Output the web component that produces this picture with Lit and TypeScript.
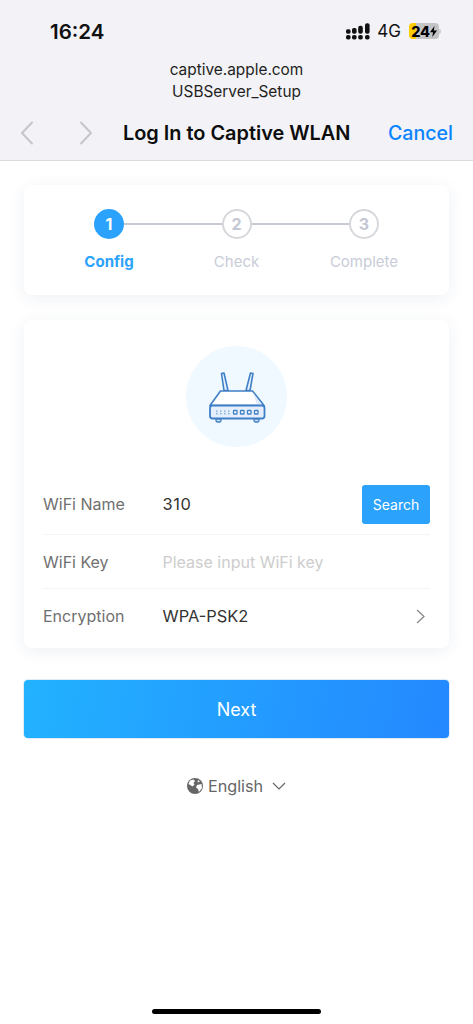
import { LitElement, html, css, svg } from "lit";
import { customElement } from "lit/decorators.js";

const steps = [
  { n: "1", label: "Config", active: true },
  { n: "2", label: "Check", active: false },
  { n: "3", label: "Complete", active: false },
];

const chevronLeft = svg`<path d="M12 1.500 2 12l10 10.500" fill="none" stroke="#c6c6ca" stroke-width="2" stroke-linecap="round" stroke-linejoin="round"/>`;
const chevronRight = svg`<path d="M2 1.500 12 12 2 22.500" fill="none" stroke="#c6c6ca" stroke-width="2" stroke-linecap="round" stroke-linejoin="round"/>`;

@customElement("app-root")
export class AppRoot extends LitElement {
  static styles = css`
    :host {
      display: block;
      width: 473px;
      height: 1024px;
      overflow: hidden;
      position: relative;
      background: #fff;
      font-family: Inter, "Liberation Sans", sans-serif;
    }

    .top {
      height: 160px;
      background: #f2f2f7;
      border-bottom: 1px solid #dcdcdf;
      display: flex;
      flex-direction: column;
    }

    .status {
      display: flex;
      align-items: center;
      height: 20px;
      margin-top: 21px;
      padding: 0 32px 0 50px;
    }
    .time {
      font-size: 20.5px;
      font-weight: 600;
      color: #111;
      flex: 1;
    }
    .signal { margin-right: 7px; display: block; }
    .net {
      font-size: 17px;
      color: #111;
      margin-right: 8px;
    }
    .battery {
      width: 30px;
      height: 16px;
      border-radius: 4px;
      background: linear-gradient(90deg, #ffcc00 0 24%, #c4c4c6 24% 100%);
      font-size: 14.5px;
      font-weight: 800;
      letter-spacing: -0.3px;
      color: #000;
      display: flex;
      align-items: center;
      justify-content: center;
    }
    .nub {
      width: 2px;
      height: 5px;
      border-radius: 0 2px 2px 0;
      background: #d0d0d2;
    }

    .site {
      margin-top: 18px;
      text-align: center;
      font-size: 15.4px;
      line-height: 22px;
      color: #1f1f21;
    }

    .nav {
      display: flex;
      align-items: center;
      height: 24px;
      margin-top: 18px;
      padding: 0 20px;
    }
    .nav svg { display: block; }
    .nav .fwd { margin-left: 45px; }
    .title {
      margin-left: 30px;
      font-size: 19.9px;
      font-weight: 600;
      color: #0c0c0c;
      flex: 1;
      white-space: nowrap;
    }
    .cancel {
      font-size: 19.6px;
      font-weight: 500;
      color: #0a84ff;
    }

    .content {
      padding: 24px 24px 0;
    }

    .card {
      background: #fff;
      border-radius: 8px;
      box-shadow: 0 3px 16px rgba(40, 70, 110, 0.08);
    }

    .steps {
      height: 110px;
      box-sizing: border-box;
      padding-top: 24px;
      display: grid;
      grid-template-columns: repeat(3, 127.5px);
      justify-content: center;
    }
    .step {
      display: flex;
      flex-direction: column;
      align-items: center;
      position: relative;
    }
    .step:not(:last-child)::after {
      content: "";
      position: absolute;
      left: 50%;
      width: 100%;
      top: 14px;
      height: 2px;
      background: #c6cad3;
    }
    .dot {
      position: relative;
      z-index: 1;
      box-sizing: border-box;
      width: 30px;
      height: 30px;
      border-radius: 50%;
      border: 2px solid #d6d8dc;
      background: #fff;
      color: #c4c8d4;
      font-size: 16px;
      font-weight: 700;
      display: flex;
      align-items: center;
      justify-content: center;
    }
    .step.active .dot {
      background: #2ba2fc;
      border-color: #2ba2fc;
      color: #fff;
    }
    .label {
      margin-top: 13px;
      font-size: 15px;
      line-height: 20px;
      color: #c8ccd8;
    }
    .step.active .label {
      color: #2ba2fc;
      font-weight: 700;
    }

    .form {
      margin-top: 25px;
      height: 328px;
      box-sizing: border-box;
      padding: 26px 19px 0;
    }
    .hero {
      width: 101px;
      height: 101px;
      margin: 0 auto;
      border-radius: 50%;
      background: #f0f9ff;
      display: flex;
      align-items: center;
      justify-content: center;
    }
    .fields { margin-top: 27px; }
    .row {
      box-sizing: border-box;
      display: flex;
      align-items: center;
      font-size: 16px;
      border-bottom: 1px solid #f3f4f6;
    }
    .row:last-child { border-bottom: 0; }
    .row.name { height: 61px; }
    .row.key { height: 54px; }
    .row.enc { height: 54px; }
    .row .name-label {
      width: 119.5px;
      color: #707070;
    }
    .row .value {
      flex: 1;
      font-size: 16.4px;
      color: #333;
    }
    .row .value.digits { letter-spacing: 0.6px; }
    .row .placeholder {
      flex: 1;
      color: #cdcdcd;
    }
    .search {
      width: 68px;
      height: 39px;
      border-radius: 3px;
      background: #2ba2fc;
      color: #fff;
      font-size: 14px;
      display: flex;
      align-items: center;
      justify-content: center;
    }
    .arrow { display: block; margin-right: 5px; }

    .next {
      margin-top: 32px;
      height: 58px;
      border-radius: 4px;
      background: linear-gradient(100deg, #22b2ff, #2488ff);
      box-shadow: 0 0 0 1px #e2ecf9;
      color: #fff;
      font-size: 18px;
      display: flex;
      align-items: center;
      justify-content: center;
    }

    .lang {
      margin-top: 37px;
      display: flex;
      align-items: center;
      justify-content: center;
      gap: 5px;
      font-size: 16.2px;
      line-height: 22px;
      color: #666;
    }
    .lang svg { display: block; }
    .lang .caret { margin-left: 4px; }

    .home {
      position: absolute;
      left: 152px;
      top: 1009px;
      width: 169px;
      height: 5px;
      border-radius: 3px;
      background: #000;
    }
  `;

  renderRouter() {
    const line = "#3f7fc6";
    return html`<svg width="60" height="56" viewBox="0 0 60 56">
      <path d="M14.500 4.500 17 4 21 21.500H17ZM43.500 4 46 4.500 43 21.500H39Z" fill="#e8f2fc" stroke=${line} stroke-width="1.600" stroke-linejoin="round"/>
      <path d="M13.500 22H45.500L57 36.500H3Z" fill="#fff" stroke=${line} stroke-width="1.600" stroke-linejoin="round"/>
      <path d="M46 23.500 55 36H50Z" fill="#dfeafa"/>
      <rect x="3" y="36.500" width="54.500" height="13" rx="2.500" fill="#e4effb" stroke=${line} stroke-width="1.800"/>
      <path d="M9 50h5v1.500a1.500 1.500 0 0 1-1.500 1.500h-2A1.500 1.500 0 0 1 9 51.500ZM47 50h5v1.500a1.500 1.500 0 0 1-1.500 1.500h-2a1.500 1.500 0 0 1-1.500-1.500Z" fill="#cfe0f6" stroke=${line} stroke-width="1.300"/>
      ${[9, 13, 17, 21].map(
        (x) => svg`<rect x=${x} y="41.500" width="1.500" height="1.300" fill="#7aa8dc"/><rect x=${x} y="44" width="1.500" height="1.300" fill="#7aa8dc"/>`
      )}
      ${[26.5, 33.5, 40.5, 47.5].map(
        (x) => svg`<rect x=${x} y="41.500" width="3.500" height="3.500" rx="0.600" fill="#fff" stroke=${line} stroke-width="1.300"/>`
      )}
    </svg>`;
  }

  render() {
    return html`
      <div class="top">
        <div class="status">
          <span class="time">16:24</span>
          <svg class="signal" width="24" height="17" viewBox="0 0 24 17" fill="#111">
            <rect x="0" y="6.300" width="4.600" height="4.400" rx="1.600"/><rect x="0" y="12" width="4.600" height="4.600" rx="1.800"/>
            <rect x="6" y="5" width="4.600" height="5.700" rx="1.800"/><rect x="6" y="12" width="4.600" height="4.600" rx="1.800"/>
            <rect x="12.200" y="2.700" width="4.600" height="8" rx="2"/><rect x="12.200" y="12" width="4.600" height="4.600" rx="1.800"/>
            <rect x="19" y="0.300" width="4.600" height="10.400" rx="2"/><rect x="19" y="12" width="4.600" height="4.600" rx="1.800"/>
          </svg>
          <span class="net">4G</span>
          <span class="battery">24<svg width="7" height="11" viewBox="0 0 7 11"><path d="M4.500 0 0 6.300H3L2.300 11 7 4.500H3.800Z" fill="#000"/></svg></span>
          <span class="nub"></span>
        </div>
        <div class="site">captive.apple.com<br />USBServer_Setup</div>
        <div class="nav">
          <svg width="14" height="24" viewBox="0 0 14 24">${chevronLeft}</svg>
          <svg class="fwd" width="14" height="24" viewBox="0 0 14 24">${chevronRight}</svg>
          <span class="title">Log In to Captive WLAN</span>
          <span class="cancel">Cancel</span>
        </div>
      </div>

      <div class="content">
        <div class="card steps">
          ${steps.map(
            (s) => html`<div class="step ${s.active ? "active" : ""}">
              <div class="dot">${s.n}</div>
              <div class="label">${s.label}</div>
            </div>`
          )}
        </div>

        <div class="card form">
          <div class="hero">${this.renderRouter()}</div>
          <div class="fields">
            <div class="row name">
              <span class="name-label">WiFi Name</span>
              <span class="value digits">310</span>
              <span class="search">Search</span>
            </div>
            <div class="row key">
              <span class="name-label">WiFi Key</span>
              <span class="placeholder">Please input WiFi key</span>
            </div>
            <div class="row enc">
              <span class="name-label">Encryption</span>
              <span class="value">WPA-PSK2</span>
              <svg class="arrow" width="9" height="15" viewBox="0 0 9 15">
                <path d="M1 1l7 6.500L1 14" fill="none" stroke="#8a8a8a" stroke-width="1.300"/>
              </svg>
            </div>
          </div>
        </div>

        <div class="next">Next</div>

        <div class="lang">
          <svg width="16" height="16" viewBox="0 0 16 16">
            <circle cx="8" cy="8" r="8" fill="#666"/>
            <path d="M3 2.500 6.500 1.500 8 3 6.500 5 7.500 6.500 5.500 8.500 4 7.500 1.500 6ZM10 7l4.500-1 .5 4-3 4-1-3-2-1.500ZM11 2l2 1.500-2.500 1Z" fill="#fff"/>
          </svg>
          <span>English</span>
          <svg class="caret" width="14" height="8" viewBox="0 0 14 8">
            <path d="M1 1l6 6 6-6" fill="none" stroke="#666" stroke-width="1.200"/>
          </svg>
        </div>
      </div>

      <div class="home"></div>
    `;
  }
}
